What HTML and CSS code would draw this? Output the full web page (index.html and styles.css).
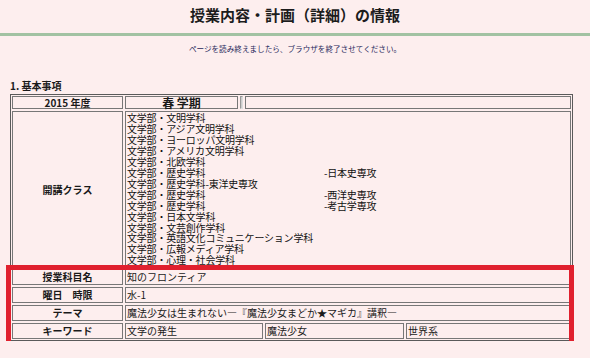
FILE: index.html
```html
<!DOCTYPE html>
<html>
<head>
    <meta charset="utf-8">
    <title>授業内容・計画（詳細）の情報</title>
    <link rel="stylesheet" href="styles.css">
</head>
<body>
    <h1 class="title">授業内容・計画（詳細）の情報</h1>
    <div class="rule"></div>
    <p class="notice">ページを読み終えましたら、ブラウザを終了させてください。</p>

    <h2 class="section">1. 基本事項</h2>
    <div class="basic">
        <div class="row row-year">
            <div class="cell label">2015 年度</div>
            <div class="cell term">春 学期</div>
            <div class="cell spacer"></div>
            <div class="cell grow"></div>
        </div>
        <div class="row">
            <div class="cell label">開講クラス</div>
            <div class="cell grow classes">
                <div class="line"><span class="main">文学部・文明学科</span></div>
                <div class="line"><span class="main">文学部・アジア文明学科</span></div>
                <div class="line"><span class="main">文学部・ヨーロッパ文明学科</span></div>
                <div class="line"><span class="main">文学部・アメリカ文明学科</span></div>
                <div class="line"><span class="main">文学部・北欧学科</span></div>
                <div class="line"><span class="main">文学部・歴史学科</span><span class="major">-日本史専攻</span></div>
                <div class="line"><span class="main">文学部・歴史学科-東洋史専攻</span></div>
                <div class="line"><span class="main">文学部・歴史学科</span><span class="major">-西洋史専攻</span></div>
                <div class="line"><span class="main">文学部・歴史学科</span><span class="major">-考古学専攻</span></div>
                <div class="line"><span class="main">文学部・日本文学科</span></div>
                <div class="line"><span class="main">文学部・文芸創作学科</span></div>
                <div class="line"><span class="main">文学部・英語文化コミュニケーション学科</span></div>
                <div class="line"><span class="main">文学部・広報メディア学科</span></div>
                <div class="line"><span class="main">文学部・心理・社会学科</span></div>
            </div>
        </div>
        <div class="marked">
            <div class="row">
                <div class="cell label">授業科目名</div>
                <div class="cell grow">知のフロンティア</div>
            </div>
            <div class="row">
                <div class="cell label">曜日　時限</div>
                <div class="cell grow">水-1</div>
            </div>
            <div class="row">
                <div class="cell label">テーマ</div>
                <div class="cell grow">魔法少女は生まれない―『魔法少女まどか★マギカ』講釈―</div>
            </div>
            <div class="row">
                <div class="cell label">キーワード</div>
                <div class="cell kw">文学の発生</div>
                <div class="cell kw kw2">魔法少女</div>
                <div class="cell grow">世界系</div>
            </div>
        </div>
    </div>
</body>
</html>
```

FILE: styles.css
```css
body {
    margin: 0;
    background-color: #fdeeee;
    color: #1a1a1a;
    font-family: "Noto Sans CJK JP", "Liberation Sans", sans-serif;
}

.title {
    margin: 0;
    padding-top: 5px;
    font-size: 15px;
    line-height: 20px;
    font-weight: bold;
    text-align: center;
    color: #1c1c1c;
}

.rule {
    margin-top: 8px;
    height: 3px;
    background-color: #a2c2a2;
}

.notice {
    margin: 8px 0 0;
    font-size: 7.6px;
    line-height: 10px;
    text-align: center;
    color: #27275a;
}

.section {
    margin: 26px 0 0 10px;
    font-size: 10px;
    line-height: 12px;
    font-weight: bold;
}

/* table of basic info */
.basic {
    margin: 2px 0 0 10px;
    width: 559px;
    border: 1px solid #5a5a5a;
    padding: 1px;
    display: flex;
    flex-direction: column;
    gap: 2px;
    font-size: 10px;
}

.row {
    display: flex;
    gap: 2px;
}

.cell {
    border: 1px solid #777;
    line-height: 13px;
    padding: 0 1px;
    white-space: nowrap;
}

.label {
    width: 107px;
    flex-shrink: 0;
    text-align: center;
    font-weight: bold;
    display: flex;
    align-items: center;
    justify-content: center;
}

.grow {
    flex: 1;
}

.row-year .cell {
    line-height: 11px;
}

.term {
    width: 109px;
    text-align: center;
    font-weight: bold;
    font-size: 12px;
}

.spacer {
    width: 0;
    padding: 0 1px 0 0;
    border-color: #999 #ddd #ddd #999;
    background-color: #ccc;
}

.classes {
    padding-top: 1px;
    color: #111;
}

.line {
    display: flex;
    line-height: 10.95px;
    font-size: 10px;
    letter-spacing: -0.2px;
}

.main {
    width: 197px;
    flex-shrink: 0;
}

.marked {
    position: relative;
    display: flex;
    flex-direction: column;
    gap: 2px;
}

.marked::after {
    content: "";
    position: absolute;
    top: -4px;
    bottom: -9px;
    left: -6px;
    right: -3px;
    border: 5px solid #e0202e;
    pointer-events: none;
}

.marked .cell {
    line-height: 14px;
}

.kw {
    width: 134px;
}

.kw2 {
    width: 135px;
}
```
